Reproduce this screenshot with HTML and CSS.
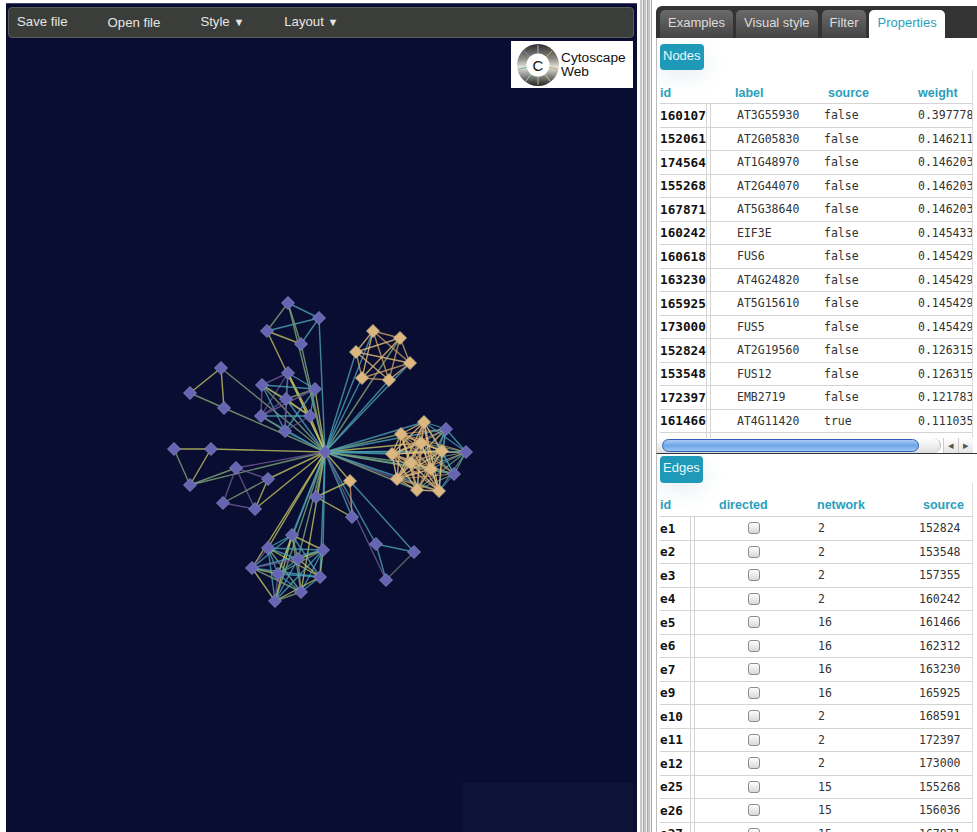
FILE: index.html
```html
<!DOCTYPE html>
<html lang="en">
<head>
<meta charset="utf-8">
<title>Cytoscape Web</title>
<link rel="stylesheet" href="styles.css">
</head>
<body>
<div class="app">
  <main class="canvas">
    <nav class="toolbar">
      <span class="tool">Save file</span>
      <span class="tool tool-low">Open file</span>
      <span class="tool">Style <small class="caret">▼</small></span>
      <span class="tool">Layout <small class="caret">▼</small></span>
    </nav>
    <div class="logo">
      <svg class="logo-mark" width="44" height="44" viewBox="0 0 44 44">
        <defs>
          <linearGradient id="lg" x1="0" y1="0" x2="0" y2="1">
            <stop offset="0" stop-color="#2c2c2c"/>
            <stop offset=".35" stop-color="#8d8d86"/>
            <stop offset=".55" stop-color="#e4e4dc"/>
            <stop offset=".8" stop-color="#777"/>
            <stop offset="1" stop-color="#222"/>
          </linearGradient>
        </defs>
        <circle cx="22" cy="22" r="21" fill="url(#lg)"/>
        <g stroke-width="1">
          <path d="M22 2V11" stroke="#b9a6d6"/>
          <path d="M8 8L15 15" stroke="#88c"/>
          <path d="M36 8L29 15" stroke="#d8a070"/>
          <path d="M3 26L12 24" stroke="#7fb0b0"/>
          <path d="M41 26L32 24" stroke="#c9a36a"/>
          <path d="M10 38L16 30" stroke="#8fcfc0"/>
          <path d="M22 42V33" stroke="#a5c77a"/>
          <path d="M34 38L28 30" stroke="#d9d06a"/>
        </g>
        <circle cx="22" cy="22" r="11.5" fill="#fff"/>
        <text x="22" y="27.5" text-anchor="middle" class="logo-c">C</text>
      </svg>
      <div class="logo-text">Cytoscape<br>Web</div>
    </div>
    <svg id="graph" class="graph" width="631" height="829" viewBox="6 3 631 829"></svg>
    <div class="patch"></div>
  </main>

  <div class="splitter"></div>

  <aside class="side">
    <div class="tabs">
      <span class="tab">Examples</span>
      <span class="tab">Visual style</span>
      <span class="tab">Filter</span>
      <span class="tab tab-active">Properties</span>
    </div>

    <section class="nodes">
      <div class="btn-wrap"><span class="btn">Nodes</span></div>
      <div class="grid">
        <div class="head node-cols"><span>id</span><span class="h-label">label</span><span class="h-source">source</span><span>weight</span></div>
        <div class="row node-cols"><b class="key">160107</b><span class="c-label">AT3G55930</span><span>false</span><span>0.397778</span></div>
        <div class="row node-cols"><b class="key">152061</b><span class="c-label">AT2G05830</span><span>false</span><span>0.146211</span></div>
        <div class="row node-cols"><b class="key">174564</b><span class="c-label">AT1G48970</span><span>false</span><span>0.146203</span></div>
        <div class="row node-cols"><b class="key">155268</b><span class="c-label">AT2G44070</span><span>false</span><span>0.146203</span></div>
        <div class="row node-cols"><b class="key">167871</b><span class="c-label">AT5G38640</span><span>false</span><span>0.146203</span></div>
        <div class="row node-cols"><b class="key">160242</b><span class="c-label">EIF3E</span><span>false</span><span>0.145433</span></div>
        <div class="row node-cols"><b class="key">160618</b><span class="c-label">FUS6</span><span>false</span><span>0.145429</span></div>
        <div class="row node-cols"><b class="key">163230</b><span class="c-label">AT4G24820</span><span>false</span><span>0.145429</span></div>
        <div class="row node-cols"><b class="key">165925</b><span class="c-label">AT5G15610</span><span>false</span><span>0.145429</span></div>
        <div class="row node-cols"><b class="key">173000</b><span class="c-label">FUS5</span><span>false</span><span>0.145429</span></div>
        <div class="row node-cols"><b class="key">152824</b><span class="c-label">AT2G19560</span><span>false</span><span>0.126315</span></div>
        <div class="row node-cols"><b class="key">153548</b><span class="c-label">FUS12</span><span>false</span><span>0.126315</span></div>
        <div class="row node-cols"><b class="key">172397</b><span class="c-label">EMB2719</span><span>false</span><span>0.121783</span></div>
        <div class="row node-cols"><b class="key">161466</b><span class="c-label">AT4G11420</span><span>true</span><span>0.111035</span></div>
        <div class="row node-cols row-empty"><b class="key"></b><span class="c-label"></span><span></span><span></span></div>
      </div>
    </section>

    <div class="hscroll">
      <div class="hscroll-track"><div class="hscroll-thumb"></div></div>
      <span class="hscroll-btn">◂</span>
      <span class="hscroll-btn">▸</span>
    </div>

    <section class="edges">
      <div class="btn-wrap btn-wrap-edges"><span class="btn">Edges</span></div>
      <div class="grid">
        <div class="head edge-cols"><span>id</span><span class="h-directed">directed</span><span class="h-network">network</span><span class="h-esource">source</span></div>
        <div class="row edge-cols"><b class="key">e1</b><span class="c-check"><input type="checkbox" class="check"></span><span>2</span><span>152824</span></div>
        <div class="row edge-cols"><b class="key">e2</b><span class="c-check"><input type="checkbox" class="check"></span><span>2</span><span>153548</span></div>
        <div class="row edge-cols"><b class="key">e3</b><span class="c-check"><input type="checkbox" class="check"></span><span>2</span><span>157355</span></div>
        <div class="row edge-cols"><b class="key">e4</b><span class="c-check"><input type="checkbox" class="check"></span><span>2</span><span>160242</span></div>
        <div class="row edge-cols"><b class="key">e5</b><span class="c-check"><input type="checkbox" class="check"></span><span>16</span><span>161466</span></div>
        <div class="row edge-cols"><b class="key">e6</b><span class="c-check"><input type="checkbox" class="check"></span><span>16</span><span>162312</span></div>
        <div class="row edge-cols"><b class="key">e7</b><span class="c-check"><input type="checkbox" class="check"></span><span>16</span><span>163230</span></div>
        <div class="row edge-cols"><b class="key">e9</b><span class="c-check"><input type="checkbox" class="check"></span><span>16</span><span>165925</span></div>
        <div class="row edge-cols"><b class="key">e10</b><span class="c-check"><input type="checkbox" class="check"></span><span>2</span><span>168591</span></div>
        <div class="row edge-cols"><b class="key">e11</b><span class="c-check"><input type="checkbox" class="check"></span><span>2</span><span>172397</span></div>
        <div class="row edge-cols"><b class="key">e12</b><span class="c-check"><input type="checkbox" class="check"></span><span>2</span><span>173000</span></div>
        <div class="row edge-cols"><b class="key">e25</b><span class="c-check"><input type="checkbox" class="check"></span><span>15</span><span>155268</span></div>
        <div class="row edge-cols"><b class="key">e26</b><span class="c-check"><input type="checkbox" class="check"></span><span>15</span><span>156036</span></div>
        <div class="row edge-cols"><b class="key">e27</b><span class="c-check"><input type="checkbox" class="check"></span><span>15</span><span>167871</span></div>
      </div>
    </section>
  </aside>
</div>
<script src="graph.js"></script>
</body>
</html>
```
FILE: styles.css
```css
* { box-sizing: border-box; }
html, body { margin: 0; height: 100%; background: #fff; overflow: hidden; }
body { font-family: "Liberation Sans", Arial, sans-serif; color: #333; }

.app { display: flex; height: 832px; width: 977px; padding: 3px 0 0 6px; overflow: hidden; }

/* left canvas */
.canvas { position: relative; flex: 0 0 631px; height: 829px; background: #0a0d32; border-top: 1px solid #45476e; padding: 3px 3px 0 2px; overflow: hidden; }
.toolbar { position: relative; z-index: 2; display: flex; gap: 40px; height: 31px; padding: 0 8px 2px; align-items: center; background: #3b3d3a; border: 1px solid #5a5c5a; border-radius: 4px; color: #e6e6e4; font-size: 13.2px; }
.tool-low { padding-top: 2px; }
.caret { font-size: 11px; }
.logo { position: absolute; z-index: 2; top: 37px; right: 4px; width: 122px; height: 47px; background: #fff; display: flex; align-items: center; padding-left: 5px; gap: 1px; }
.logo-mark { flex: none; }
.logo-c { font: 15px "Liberation Sans", Arial, sans-serif; fill: #111; }
.logo-text { color: #111; font-size: 13.7px; line-height: 14px; }
.graph { position: absolute; left: 0; top: -1px; filter: blur(.35px); }
.patch { position: absolute; left: 456px; top: 779px; right: 4px; bottom: 0; background: rgba(30, 60, 90, .14); }

/* splitter */
.splitter { flex: 0 0 12px; margin: -3px 4px 0 3px; width: 12px; background: repeating-linear-gradient(90deg, #c8c8c8 0 2px, #eee 2px 3px, #aaa 3px 4px); }

/* right panel */
.side { flex: 0 0 321px; width: 321px; display: flex; flex-direction: column; }
.tabs { display: flex; gap: 3px; height: 32px; margin-top: 3px; padding: 4px 0 0 4px; background: #333; border-radius: 6px 0 0 0; flex: none; align-items: stretch; }
.tab { padding: 5px 8px 0; font-size: 13px; color: #ddd; background: linear-gradient(#6a6a6a, #444); border-radius: 5px 5px 0 0; }
.tab:nth-child(2) { margin-right: 1px; }
.tab-active { background: #fff; color: #2a9fbc; }

.nodes { flex: 0 0 400px; height: 400px; padding: 6px 0 0 3px; overflow: hidden; border-left: 1px solid #bbb; }
.edges { flex: 1; padding: 2px 0 0 3px; overflow: hidden; border-left: 1px solid #bbb; border-top: 1px solid #333; min-height: 0; }

.btn-wrap { height: 26px; }
.btn-wrap-edges { height: 27px; }
.btn { display: inline-block; height: 100%; line-height: 24px; padding: 0 3px; background: #1e9ab8; color: #e8f6fa; font-size: 13px; border-radius: 4px; box-shadow: 0 6px 22px rgba(40, 110, 140, .12); }

.grid { width: 313px; border-right: 1px solid #ddd; overflow: hidden; font: 11.5px "DejaVu Sans Mono", monospace; }
.head { display: grid; height: 33px; color: #2a9fbc; font: bold 12.5px "Liberation Sans", Arial, sans-serif; align-items: end; padding-bottom: 3px; }
.row { display: grid; height: 23.5px; border-top: 1px solid #d4d4d4; align-items: center; }
.node-cols { grid-template-columns: 47px 117px 94px 55px; }
.edge-cols { grid-template-columns: 31px 127px 101px 54px; }
.row > :nth-child(2) { border-left: 1px solid #d4d4d4; height: 100%; display: flex; align-items: center; margin-left: 3px; }
.row > .c-label { padding-left: 26px; white-space: nowrap; overflow: hidden; }
.key { font: bold 12.7px "DejaVu Sans Mono", monospace; color: #111; border-right: 1px solid #d4d4d4; height: 100%; display: flex; align-items: center; }
.row-empty { height: 10px; }
.h-label { margin-left: 28px; }
.h-source { margin-left: 4px; }
.h-directed { margin-left: 28px; }
.h-network { margin-left: -1px; }
.h-esource { margin-left: 4px; }
.edges .head { padding-bottom: 4px; }
.c-check { justify-content: center; padding-right: 5px; }
.check { appearance: none; -webkit-appearance: none; width: 12px; height: 12px; margin: 0; border: 1px solid #8c8c8c; border-radius: 3px; background: linear-gradient(#fdfdfd, #d8d8d8); }

/* scrollbar */
.hscroll { flex: none; display: flex; align-items: center; height: 15px; background: #fff; border-left: 1px solid #bbb; padding-right: 4px; }
.hscroll-track { flex: 1; height: 15px; margin-right: 2px; padding: 1px 0 0 5px; background: linear-gradient(#fff, #dedede); border-right: 1px solid #bbb; border-radius: 0 9px 9px 0; }
.hscroll-thumb { width: 257px; height: 13px; border-radius: 7px; border: 1px solid #2f62b8; background: linear-gradient(#a9cdf3, #6ea6e6 50%, #9cc6f2); }
.hscroll-btn { flex: none; width: 15px; height: 15px; background: linear-gradient(#fff, #e4e4e4); border-left: 1px solid #ccc; font-size: 11px; line-height: 14px; text-align: center; color: #555; }
```
FILE: graph.js
```js
(function () {
  var NS = "http://www.w3.org/2000/svg";
  var svg = document.getElementById("graph");
  var Y = "#c4c662", G = "#7fa878", T = "#4ba4b6", P = "#6d5a92", O = "#c8a066", L = "#e2bd7c";
  var hub = [325, 452];

  var A = [[288,303],[319,318],[267,331],[301,344]];
  var B = [[288,373],[262,385],[315,389],[286,399],[261,416],[310,416],[285,431]];
  var C = [[221,368],[190,393],[224,408]];
  var D = [[174,449],[211,449],[190,485]];
  var E = [[236,468],[268,479],[223,503],[255,509]];
  var F = [[292,535],[268,548],[323,550],[298,559],[252,568],[278,574],[320,577],[301,592],[275,601]];
  var R = [[316,497],[350,481],[352,517],[376,544],[414,552],[386,580]];
  var Go = [[373,331],[400,338],[356,352],[410,363],[362,378],[389,380]];
  var Ho = [[424,422],[401,434],[421,443],[442,451],[392,454],[411,463],[431,469],[397,479],[417,490],[439,491]];
  var Hb = [[446,429],[466,452],[454,474]];

  function edge(a, b, c, w, o) {
    var l = document.createElementNS(NS, "line");
    l.setAttribute("x1", a[0]); l.setAttribute("y1", a[1]);
    l.setAttribute("x2", b[0]); l.setAttribute("y2", b[1]);
    l.setAttribute("stroke", c);
    l.setAttribute("stroke-width", w || 1.4);
    l.setAttribute("stroke-opacity", o || 0.8);
    svg.appendChild(l);
  }
  function clique(list, colors, o) {
    var k = 0;
    for (var i = 0; i < list.length; i++) for (var j = i + 1; j < list.length; j++) {
      edge(list[i], list[j], colors[k % colors.length], 1.4, o);
      k += 1;
    }
  }
  function spokes(list, colors) {
    list.forEach(function (n, i) { edge(hub, n, colors[i % colors.length]); });
  }
  function node(p, fill, stroke) {
    var d = document.createElementNS(NS, "polygon");
    var r = 6.5;
    d.setAttribute("points", [p[0], p[1]-r, p[0]+r, p[1], p[0], p[1]+r, p[0]-r, p[1]].join(" "));
    d.setAttribute("fill", fill);
    d.setAttribute("stroke", stroke);
    d.setAttribute("stroke-width", 0.8);
    svg.appendChild(d);
  }

  spokes(A, [G, T, Y, G]);
  spokes(B, [Y, G, Y, T, T, Y, T]);
  spokes([C[0], C[2]], [G, G]);
  spokes(D.slice(1), [Y, G]);
  spokes([E[0], E[1], E[3]], [P, Y, Y]);
  spokes(F, [T, Y, T, G, Y, T, T, Y, G]);
  spokes([R[0], R[1], R[2], R[3], R[5]], [G, Y, T, T, P]);
  spokes(Go, [T, G, T, T, T, T]);
  spokes(Ho, [T, G, Y, T, T, G, T, P, G, T]);
  spokes(Hb, [T, T, G]);

  edge(A[0], A[1], T); edge(A[0], A[2], G); edge(A[2], A[1], T);
  edge(A[2], A[3], Y); edge(A[1], A[3], T); edge(A[0], A[3], G);
  clique(B, [P, T, T, P, Y, P, T, G, P, Y, T, G]);
  edge(C[0], C[1], Y); edge(C[1], C[2], G); edge(C[0], C[2], Y);
  edge(D[0], D[1], Y); edge(D[0], D[2], G); edge(D[1], D[2], Y);
  edge(E[0], E[1], P); edge(E[0], E[2], P); edge(E[0], E[3], P);
  edge(E[2], E[3], P); edge(E[2], E[1], G); edge(E[3], E[1], Y);
  edge(D[2], E[0], G);
  clique(F, [T, Y, G, T, Y, T, G, Y, T, T, P]);
  edge(R[0], R[1], Y); edge(R[1], R[2], O); edge(R[0], R[2], Y);
  edge(R[1], R[4], T); edge(R[3], R[4], T); edge(R[4], R[5], G, 1.2, .6); edge(R[3], R[5], T);
  Hb.forEach(function (n) {
    Ho.forEach(function (m, i) { edge(n, m, [T, O, G][i % 3], 1.1, .8); });
  });
  clique(Go, [O, L], .8);
  clique(Ho, [L, O, L], .85);
  edge(Hb[0], Hb[1], T); edge(Hb[1], Hb[2], G);

  var blue = A.concat(B, C, D, E, F, [R[0], R[2], R[3], R[4], R[5]], Hb, [hub]);
  var tan = Go.concat(Ho, [R[1]]);
  blue.forEach(function (p) { node(p, "#6565b3", "#8a8ac2"); });
  tan.forEach(function (p) { node(p, "#dcb880", "#c8ae86"); });
})();
```
